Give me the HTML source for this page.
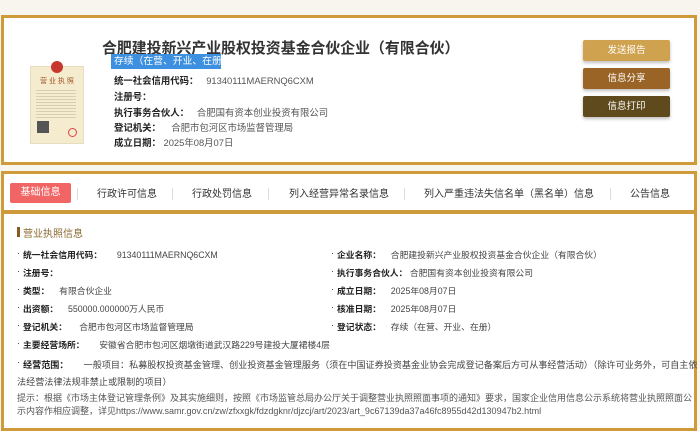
<!DOCTYPE html>
<html><head><meta charset="utf-8"><style>
*{margin:0;padding:0;box-sizing:border-box}
body{width:700px;height:413px;overflow:hidden;background:#f8f5ef;font-family:"Liberation Sans","Noto Sans CJK SC",sans-serif;color:#333;position:relative}
.abs{position:absolute;white-space:nowrap}
.card1{position:absolute;left:1px;top:15px;width:696px;height:150px;border:3px solid #cf9b3a;background:#fff}
.card2{position:absolute;left:1px;top:171px;width:696px;height:260px;border:3px solid #cf9b3a;background:#fff}
.bar{position:absolute;left:0;top:36px;width:100%;height:4px;background:#cf9b3a}
.r{font-size:9.4px;color:#555}
.r b{color:#222;font-weight:bold}
.btn{position:absolute;left:583px;width:87px;height:21px;border-radius:2px;color:#fff;font-size:9.5px;text-align:center;line-height:21px;box-shadow:0 2px 3px rgba(0,0,0,.25)}
.tab{position:absolute;top:185px;font-size:10px;color:#333;white-space:nowrap}
.sep{position:absolute;top:188px;width:1px;height:12px;background:#ddd}
.f{position:absolute;font-size:8.8px;color:#444;white-space:nowrap}
.f b{color:#222}
.f:before{content:"·";position:absolute;left:-6px;color:#333}
</style></head><body>
<div class="card1"></div>
<div class="card2"><div class="bar"></div></div>
<div class="abs" style="left:30px;top:66px;width:54px;height:78px;background:#f5ebce;border:1px solid #e6dcc0"></div>
<div class="abs" style="left:51px;top:61px;width:12px;height:12px;border-radius:50%;background:#c8372d"></div>
<div class="abs" style="left:40px;top:76px;font-size:7px;color:#a05020">营 业 执 照</div>
<div class="abs" style="left:36px;top:88px;width:40px;height:30px;background:repeating-linear-gradient(#f5ebce 0 2px,#d8cdb0 2px 3px)"></div>
<div class="abs" style="left:37px;top:121px;width:12px;height:12px;background:#555"></div>
<div class="abs" style="left:68px;top:128px;width:9px;height:9px;border-radius:50%;border:1px solid #d44"></div>

<div class="abs" style="left:102px;top:37px;font-size:14.9px;font-weight:bold;color:#333">合肥建投新兴产业股权投资基金合伙企业（有限合伙）</div>
<div class="abs" style="left:111px;top:54px;width:110px;height:15px;background:#3d8fe0;color:#fff;font-size:9.8px;line-height:15px;padding-left:3px">存续（在营、开业、在册）</div>
<div class="abs r" style="left:114px;top:73px"><b>统一社会信用代码：</b>&nbsp;&nbsp;&nbsp;91340111MAERNQ6CXM</div>
<div class="abs r" style="left:114px;top:89px"><b>注册号：</b></div>
<div class="abs r" style="left:114px;top:105px"><b>执行事务合伙人：</b>&nbsp;&nbsp;&nbsp;合肥国有资本创业投资有限公司</div>
<div class="abs r" style="left:114px;top:120px"><b>登记机关：</b>&nbsp;&nbsp;&nbsp;&nbsp;合肥市包河区市场监督管理局</div>
<div class="abs r" style="left:114px;top:135px"><b>成立日期：</b>&nbsp;2025年08月07日</div>

<div class="btn" style="top:40px;background:#cea24e">发送报告</div>
<div class="btn" style="top:68px;background:#9a6426">信息分享</div>
<div class="btn" style="top:96px;background:#5e4a1c">信息打印</div>

<div class="abs" style="left:10px;top:183px;width:61px;height:20px;background:#f16565;border-radius:2px;color:#fff;font-size:10px;text-align:center;line-height:20px">基础信息</div>
<div class="sep" style="left:77px"></div>
<div class="tab" style="left:97px">行政许可信息</div>
<div class="sep" style="left:172px"></div>
<div class="tab" style="left:192px">行政处罚信息</div>
<div class="sep" style="left:268px"></div>
<div class="tab" style="left:289px">列入经营异常名录信息</div>
<div class="sep" style="left:404px"></div>
<div class="tab" style="left:424px">列入严重违法失信名单（黑名单）信息</div>
<div class="sep" style="left:610px"></div>
<div class="tab" style="left:630px">公告信息</div>

<div class="abs" style="left:17px;top:227px;width:3px;height:10px;background:#8a5a20"></div>
<div class="abs" style="left:23px;top:225px;font-size:10px;color:#8a6a30">营业执照信息</div>

<div class="f" style="left:23px;top:248px"><b>统一社会信用代码：</b>&nbsp;&nbsp;&nbsp;&nbsp;&nbsp;&nbsp;91340111MAERNQ6CXM</div>
<div class="f" style="left:23px;top:266px"><b>注册号：</b></div>
<div class="f" style="left:23px;top:284px"><b>类型：</b>&nbsp;&nbsp;&nbsp;&nbsp;有限合伙企业</div>
<div class="f" style="left:23px;top:302px"><b>出资额：</b>&nbsp;&nbsp;&nbsp;&nbsp;550000.000000万人民币</div>
<div class="f" style="left:23px;top:320px"><b>登记机关：</b>&nbsp;&nbsp;&nbsp;&nbsp;&nbsp;合肥市包河区市场监督管理局</div>
<div class="f" style="left:23px;top:338px"><b>主要经营场所：</b>&nbsp;&nbsp;&nbsp;&nbsp;&nbsp;&nbsp;安徽省合肥市包河区烟墩街道武汉路229号建投大厦裙楼4层</div>
<div class="f" style="left:23px;top:357px;font-size:9.1px"><b>经营范围：</b>&nbsp;&nbsp;&nbsp;&nbsp;&nbsp;&nbsp;一般项目：私募股权投资基金管理、创业投资基金管理服务（须在中国证券投资基金业协会完成登记备案后方可从事经营活动）（除许可业务外，可自主依</div>
<div class="abs" style="left:17px;top:374px;font-size:9.1px;color:#444">法经营法律法规非禁止或限制的项目）</div>
<div class="f" style="left:337px;top:248px"><b>企业名称：</b>&nbsp;&nbsp;&nbsp;&nbsp;合肥建投新兴产业股权投资基金合伙企业（有限合伙）</div>
<div class="f" style="left:337px;top:266px"><b>执行事务合伙人：</b>&nbsp;合肥国有资本创业投资有限公司</div>
<div class="f" style="left:337px;top:284px"><b>成立日期：</b>&nbsp;&nbsp;&nbsp;&nbsp;2025年08月07日</div>
<div class="f" style="left:337px;top:302px"><b>核准日期：</b>&nbsp;&nbsp;&nbsp;&nbsp;2025年08月07日</div>
<div class="f" style="left:337px;top:320px"><b>登记状态：</b>&nbsp;&nbsp;&nbsp;&nbsp;存续（在营、开业、在册）</div>
<div class="abs" style="left:17px;top:391px;font-size:9px;color:#555">提示：根据《市场主体登记管理条例》及其实施细则，按照《市场监管总局办公厅关于调整营业执照照面事项的通知》要求，国家企业信用信息公示系统将营业执照照面公</div>
<div class="abs" style="left:17px;top:404px;font-size:9px;color:#555">示内容作相应调整，详见https://www.samr.gov.cn/zw/zfxxgk/fdzdgknr/djzcj/art/2023/art_9c67139da37a46fc8955d42d130947b2.html</div>
</body></html>
